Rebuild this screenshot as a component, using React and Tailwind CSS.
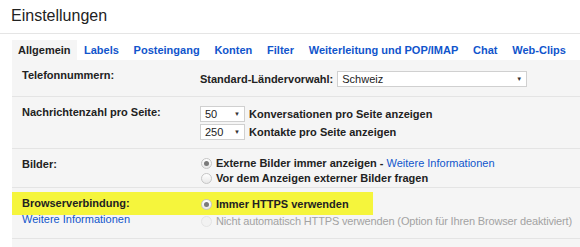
import React from "react";

function Radio({ checked, disabled }) {
  return (
    <span
      className={
        "inline-flex items-center justify-center w-[11px] h-[11px] rounded-full border shrink-0 " +
        (disabled
          ? "border-[#e4e4e4] bg-[#f2f2f2]"
          : "border-[#c6c6c6] bg-gradient-to-b from-[#ffffff] to-[#e8e8e8]")
      }
    >
      {checked && <span className="w-[5px] h-[5px] rounded-full bg-[#7a7a7a]" />}
    </span>
  );
}

function Select({ value, w }) {
  return (
    <div
      className={
        "flex items-center justify-between h-[16px] bg-white border border-[#d0d0d0] pl-[4px] pr-[4px] font-normal " +
        w
      }
    >
      <span className="leading-[14px]">{value}</span>
      <span className="text-[6px] leading-none text-[#333]">▼</span>
    </div>
  );
}

export default function App() {
  const tabs = [
    "Labels",
    "Posteingang",
    "Konten",
    "Filter",
    "Weiterleitung und POP/IMAP",
    "Chat",
    "Web-Clips",
    "Labs",
  ];
  return (
    <div className="w-[580px] h-[247px] overflow-hidden bg-white text-[#222] text-[11px] font-['Liberation_Sans',Arial,sans-serif]">
      <div className="h-[34px] border-b border-[#e5e5e5] pl-[11px] pt-[6px] text-[16px] leading-[20px] text-[#222]">
        Einstellungen
      </div>
      <div className="pl-[12px] pt-[6px]">
        <div className="flex h-[20px] items-stretch whitespace-nowrap font-bold">
          <div className="bg-[#f5f5f5] px-[6px] flex items-center text-[#222]">Allgemein</div>
          {tabs.map((t) => (
            <div key={t} className="px-[7.4px] flex items-center text-[#15c]">
              {t}
            </div>
          ))}
        </div>
        <div className="bg-[#f5f5f5]">
          {/* Row 1 */}
          <div className="flex border-b border-[#e4e4e4] h-[37px]">
            <div className="w-[188px] pl-[10px] pt-[7px] leading-[16px] font-bold">Telefonnummern:</div>
            <div className="pt-[11px] flex items-start font-bold leading-[16px]">
              <span className="mr-[4px]">Standard-Ländervorwahl:</span>
              <Select value="Schweiz" w="w-[190px]" />
            </div>
          </div>
          {/* Row 2 */}
          <div className="flex border-b border-[#e4e4e4] h-[52px]">
            <div className="w-[188px] pl-[10px] pt-[7px] leading-[16px] font-bold">Nachrichtenzahl pro Seite:</div>
            <div className="pt-[9px] flex flex-col gap-[2px] font-bold">
              <div className="flex items-center gap-[4px] leading-[16px]">
                <Select value="50" w="w-[45px]" />
                <span>Konversationen pro Seite anzeigen</span>
              </div>
              <div className="flex items-center gap-[4px] leading-[16px]">
                <Select value="250" w="w-[45px]" />
                <span>Kontakte pro Seite anzeigen</span>
              </div>
            </div>
          </div>
          {/* Row 3 */}
          <div className="flex border-b border-[#e4e4e4] h-[39px]">
            <div className="w-[188px] pl-[10px] pt-[7px] leading-[16px] font-bold">Bilder:</div>
            <div className="pt-[7px] flex flex-col font-bold">
              <div className="flex items-center gap-[4px] leading-[15px] pl-[1px]">
                <Radio checked />
                <span>
                  Externe Bilder immer anzeigen -{" "}
                  <span className="font-normal text-[#15c]">Weitere Informationen</span>
                </span>
              </div>
              <div className="flex items-center gap-[4px] leading-[15px] pl-[1px]">
                <Radio />
                <span>Vor dem Anzeigen externer Bilder fragen</span>
              </div>
            </div>
          </div>
          {/* Row 4 */}
          <div className="relative flex border-b border-[#e4e4e4] h-[51px]">
            <div className="absolute left-0 top-[4px] w-[361px] h-[23px] bg-[#f5f53c]" />
            <div className="relative w-[188px] pl-[10px] pt-[7px] leading-[16px]">
              <div className="font-bold">Browserverbindung:</div>
              <div className="text-[#15c]">Weitere Informationen</div>
            </div>
            <div className="relative pt-[8px] flex flex-col gap-[1px]">
              <div className="flex items-center gap-[4px] leading-[16px] pl-[1px] font-bold">
                <Radio checked />
                <span>Immer HTTPS verwenden</span>
              </div>
              <div className="flex items-center gap-[4px] leading-[16px] pl-[1px] text-[#a3a3a3] whitespace-nowrap tracking-[-0.15px]">
                <Radio disabled />
                <span>Nicht automatisch HTTPS verwenden (Option für Ihren Browser deaktiviert)</span>
              </div>
            </div>
          </div>
          <div className="h-[20px]" />
        </div>
      </div>
    </div>
  );
}
